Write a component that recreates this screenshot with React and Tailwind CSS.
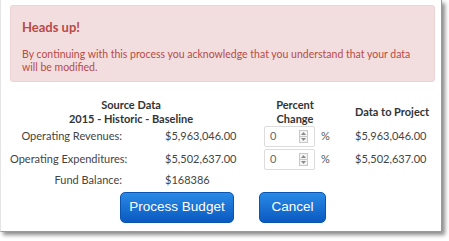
import React from 'react';

const font = { fontFamily: 'Lato, "Open Sans", sans-serif' };

function Spinner() {
  return (
    <div className="flex flex-col w-[9px] h-[13px] border border-[#c8c8c8] bg-[#f4f4f4]">
      <div className="flex-1 flex items-center justify-center border-b border-[#c8c8c8]">
        <svg width="5" height="3" viewBox="0 0 5 3"><path d="M0 3 L2.5 0 L5 3 Z" fill="#8a8a8a" /></svg>
      </div>
      <div className="flex-1 flex items-center justify-center">
        <svg width="5" height="3" viewBox="0 0 5 3"><path d="M0 0 L2.5 3 L5 0 Z" fill="#8a8a8a" /></svg>
      </div>
    </div>
  );
}

function PercentInput() {
  return (
    <div className="flex items-center gap-[6px]">
      <div className="w-[51px] h-[21px] border border-[#dcdcdc] rounded-[2px] bg-white flex items-center justify-between pl-[5px] pr-[6px]">
        <span className="text-[11px] text-[#666]">0</span>
        <Spinner />
      </div>
      <span className="text-[11px] text-[#555]">%</span>
    </div>
  );
}

function Row({ label, source, project, input = true, h = 'h-[23px]' }) {
  return (
    <div className={`grid grid-cols-[112px_43px_99px_91px_auto] items-center ${h} text-[11px] text-[#444] whitespace-nowrap`}>
      <div className="text-right">{label}</div>
      <div />
      <div>{source}</div>
      <div>{input && <PercentInput />}</div>
      <div>{project}</div>
    </div>
  );
}

export default function App() {
  return (
    <div className="w-[449px] h-[241px] bg-white" style={font}>
      <div className="w-[442px] h-[232px] bg-white border-l border-[#e4e4e4] border-b border-r border-b-[#9a9a9a] border-r-[#9a9a9a] shadow-[3px_3px_4px_rgba(0,0,0,0.45)] pt-[5px] pl-[9px] pr-[6px]">
        <div className="bg-[#f2dede] border border-[#ebd3d6] rounded-[3px] h-[77px] pl-[11px] pt-[13px] text-[#b94a48]">
          <div className="text-[13px] font-bold leading-[16px]">Heads up!</div>
          <div className="text-[10.5px] leading-[13px] mt-[13px] w-[390px]">
            By continuing with this process you acknowledge that you understand that your data will be modified.
          </div>
        </div>

        <div className="grid grid-cols-[242px_86px_auto] mt-[16px] text-[11px] font-bold text-[#333] leading-[14px] whitespace-nowrap">
          <div className="text-center">
            <div>Source Data</div>
            <div>2015 - Historic - Baseline</div>
          </div>
          <div className="text-center">
            <div>Percent</div>
            <div>Change</div>
          </div>
          <div className="flex items-center pl-[17px]">Data to Project</div>
        </div>

        <div className="mt-[-1px]">
          <Row label="Operating Revenues:" source="$5,963,046.00" project="$5,963,046.00" />
          <Row label="Operating Expenditures:" source="$5,502,637.00" project="$5,502,637.00" />
          <Row label="Fund Balance:" source="$168386" input={false} h="h-[18px]" />
        </div>

        <div className="flex gap-[25px] pl-[110px] mt-[3px]" style={{ fontFamily: '"Liberation Sans", Arial, sans-serif' }}>
          <button className="w-[114px] h-[31px] rounded-[5px] text-white text-[13.5px] bg-gradient-to-b from-[#2a8ae6] to-[#0a59c0] border border-[#0a55b0]">
            Process Budget
          </button>
          <button className="w-[67px] h-[31px] rounded-[5px] text-white text-[13.5px] bg-gradient-to-b from-[#2a8ae6] to-[#0a59c0] border border-[#0a55b0]">
            Cancel
          </button>
        </div>
      </div>
    </div>
  );
}
